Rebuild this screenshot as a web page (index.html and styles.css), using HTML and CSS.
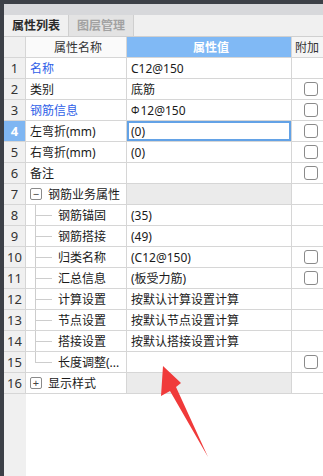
FILE: index.html
```html
<!DOCTYPE html>
<html lang="zh-CN">
<head>
    <meta charset="UTF-8">
    <title>属性列表</title>
    <link rel="stylesheet" href="styles.css">
</head>
<body>
    <div class="panel">
        <div class="strip"></div>
        <div class="tabs">
            <div class="tab active">属性列表</div>
            <div class="tab">图层管理</div>
            <div class="tab-rest"></div>
        </div>
        <div class="grid">
            <div class="row head">
                <div class="num"></div>
                <div class="name">属性名称</div>
                <div class="val">属性值</div>
                <div class="extra">附加</div>
            </div>
            <div class="row">
                <div class="num">1</div>
                <div class="name link">名称</div>
                <div class="val">C12@150</div>
                <div class="extra"></div>
            </div>
            <div class="row">
                <div class="num">2</div>
                <div class="name">类别</div>
                <div class="val">底筋</div>
                <div class="extra"><span class="check"></span></div>
            </div>
            <div class="row">
                <div class="num">3</div>
                <div class="name link">钢筋信息</div>
                <div class="val"><span class="grade">Φ</span>12@150</div>
                <div class="extra"><span class="check"></span></div>
            </div>
            <div class="row selected">
                <div class="num">4</div>
                <div class="name">左弯折(mm)</div>
                <div class="val">(0)</div>
                <div class="extra"><span class="check"></span></div>
            </div>
            <div class="row">
                <div class="num">5</div>
                <div class="name">右弯折(mm)</div>
                <div class="val">(0)</div>
                <div class="extra"><span class="check"></span></div>
            </div>
            <div class="row">
                <div class="num">6</div>
                <div class="name">备注</div>
                <div class="val"></div>
                <div class="extra"><span class="check"></span></div>
            </div>
            <div class="row group">
                <div class="num">7</div>
                <div class="name"><span class="toggle">−</span>钢筋业务属性</div>
                <div class="val"></div>
                <div class="extra"></div>
            </div>
            <div class="row">
                <div class="num">8</div>
                <div class="name"><span class="branch"></span>钢筋锚固</div>
                <div class="val">(35)</div>
                <div class="extra"></div>
            </div>
            <div class="row">
                <div class="num">9</div>
                <div class="name"><span class="branch"></span>钢筋搭接</div>
                <div class="val">(49)</div>
                <div class="extra"></div>
            </div>
            <div class="row">
                <div class="num">10</div>
                <div class="name"><span class="branch"></span>归类名称</div>
                <div class="val">(C12@150)</div>
                <div class="extra"><span class="check"></span></div>
            </div>
            <div class="row">
                <div class="num">11</div>
                <div class="name"><span class="branch"></span>汇总信息</div>
                <div class="val">(板受力筋)</div>
                <div class="extra"><span class="check"></span></div>
            </div>
            <div class="row">
                <div class="num">12</div>
                <div class="name"><span class="branch"></span>计算设置</div>
                <div class="val">按默认计算设置计算</div>
                <div class="extra"></div>
            </div>
            <div class="row">
                <div class="num">13</div>
                <div class="name"><span class="branch"></span>节点设置</div>
                <div class="val">按默认节点设置计算</div>
                <div class="extra"></div>
            </div>
            <div class="row">
                <div class="num">14</div>
                <div class="name"><span class="branch"></span>搭接设置</div>
                <div class="val">按默认搭接设置计算</div>
                <div class="extra"></div>
            </div>
            <div class="row">
                <div class="num">15</div>
                <div class="name"><span class="branch last"></span>长度调整(...</div>
                <div class="val"></div>
                <div class="extra"><span class="check"></span></div>
            </div>
            <div class="row group">
                <div class="num">16</div>
                <div class="name"><span class="toggle">+</span>显示样式</div>
                <div class="val"></div>
                <div class="extra"></div>
            </div>
            <div class="filler">
                <div class="num"></div>
                <div></div>
            </div>
        </div>
    </div>

    <svg class="arrow" width="323" height="476" viewBox="0 0 323 476">
        <polygon points="163,366 181,383 176,387 208,457 170,391 161,396" fill="#f03a3a"/>
    </svg>
</body>
</html>
```

FILE: styles.css
```css
html, body {
    margin: 0;
    padding: 0;
    height: 100%;
}
body {
    background-color: #3c4047;
    font-family: "Noto Sans", "Noto Sans CJK SC", sans-serif;
    font-size: 12px;
    color: #1a1a1a;
    overflow: hidden;
}
.panel {
    margin: 4px 0 0 4px;
    height: calc(100% - 4px);
    display: flex;
    flex-direction: column;
    background-color: #fff;
}
.strip {
    height: 11px;
    background-color: #d7d8db;
}
.tabs {
    display: flex;
    height: 21px;
    background-color: #f0f0f0;
    border-bottom: 1px solid #d0d0d0;
}
.tab {
    width: 64px;
    line-height: 21px;
    text-align: center;
    border-right: 1px solid #cfcfcf;
    color: #a2a2a2;
    background-color: #e3e3e3;
    font-weight: bold;
}
.tab.active {
    color: #2a2a2a;
    background-color: #f0f0f0;
}
.tab-rest {
    flex: 1;
}
.grid {
    flex: 1;
    display: flex;
    flex-direction: column;
}
.row, .filler {
    display: grid;
    grid-template-columns: 22px 101px 165px 1fr;
    height: 21px;
}
.row > div {
    border-right: 1px solid #d6d6d6;
    border-bottom: 1px solid #d6d6d6;
    display: flex;
    align-items: center;
    white-space: nowrap;
    overflow: hidden;
    box-sizing: border-box;
}
.row .num {
    justify-content: center;
    background-color: #f0f0f0;
    color: #333;
    font-size: 13px;
}
.row .name {
    padding-left: 4px;
}
.row .val {
    padding-left: 4px;
}
.row .extra {
    border-right: none;
    padding-left: 12px;
}
.head .name {
    justify-content: center;
    background-color: #fafafa;
    color: #333;
}
.head .val {
    justify-content: center;
    background-color: #80b9f5;
    color: #fff;
    font-weight: bold;
}
.head .extra {
    padding-left: 3px;
    background-color: #f5f5f5;
    color: #333;
}
.link {
    color: #2f5fe8;
}
.grade {
    font-size: 10px;
    margin-right: 1px;
}
.selected .num {
    background-color: #7fb6f2;
    color: #fff;
    font-weight: bold;
}
.selected .val {
    box-shadow: inset 0 0 0 2px #63a2e6;
}
.group .val {
    background-color: #ebebeb;
}
.check {
    width: 12px;
    height: 12px;
    border: 1px solid #8a8a8a;
    border-radius: 3px;
    background-color: #fff;
}
.toggle {
    width: 10px;
    height: 10px;
    border: 1px solid #8a8a8a;
    border-radius: 2px;
    margin-right: 6px;
    font-size: 11px;
    line-height: 10px;
    text-align: center;
    color: #444;
}
.row .name .branch {
    align-self: stretch;
    width: 22px;
    margin: 0 6px 0 -4px;
    flex-shrink: 0;
    background-image: linear-gradient(#cdcdcd, #cdcdcd), linear-gradient(#cdcdcd, #cdcdcd);
    background-size: 1px 22px, 17px 1px;
    background-position: 9px -1px, 9px 10px;
    background-repeat: no-repeat;
    margin-left: -4px;
    width: 26px;
}
.row .name .branch.last {
    background-size: 1px 12px, 17px 1px;
}
.filler {
    flex: 1;
    height: auto;
}
.filler .num {
    background-color: #f0f0f0;
}
.arrow {
    position: absolute;
    left: 0;
    top: 0;
    pointer-events: none;
}
```
